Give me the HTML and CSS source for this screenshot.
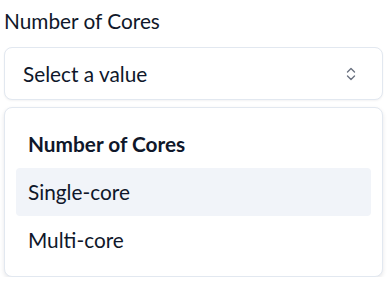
FILE: index.html
```html
<!DOCTYPE html>
<html lang="en">

<head>
  <meta charset="UTF-8" />
  <meta name="viewport" content="width=device-width, initial-scale=1.0" />
  <title>Number of Cores</title>
  <link rel="stylesheet" href="styles.css">
</head>

<body>
  <div class="field">
    <label class="field-label">Number of Cores</label>
    <button class="select-trigger" type="button">
      <span class="select-value">Select a value</span>
      <svg class="select-icon" width="10" height="16" viewBox="0 0 10 16" fill="none">
        <path d="M1.5 6 L5 2.5 L8.5 6" stroke="#6b7280" stroke-width="1.4" stroke-linecap="round" stroke-linejoin="round" />
        <path d="M1.5 10 L5 13.5 L8.5 10" stroke="#6b7280" stroke-width="1.4" stroke-linecap="round" stroke-linejoin="round" />
      </svg>
    </button>
    <ul class="select-menu">
      <li class="menu-group">Number of Cores</li>
      <li class="menu-item on">Single-core</li>
      <li class="menu-item">Multi-core</li>
    </ul>
  </div>
</body>

</html>
```

FILE: styles.css
```css
html, body, div, ul, li {
  padding: 0;margin: 0;
}
ul {
  list-style: none;
}

body {
  font-family: Lato, "Noto Sans", sans-serif;
  font-size: 20.8px;
  color: #0f172a;
  background: #fff;
  padding: 5px 6px 0 4px;
}

.field {
  display: flex;
  flex-direction: column;
}

.field-label {
  line-height: 31px;
  margin-bottom: 11px;
}

.select-trigger {
  display: flex;
  align-items: center;
  justify-content: space-between;
  height: 53px;
  padding: 0 26px 0 18px;
  background: #fff;
  border: 1px solid #e2e8f0;
  border-radius: 8px;
  font: inherit;
  color: #0f172a;
  box-shadow: 0 1px 2px rgba(15, 23, 42, .05);
}

.select-menu {
  margin-top: 7px;
  padding: 12px 11px;
  border: 1px solid #e2e8f0;
  border-radius: 8px;
  background: #fff;
  box-shadow: 0 2px 4px rgba(15, 23, 42, .1);
}

.menu-group {
  font-weight: 700;
  line-height: 31px;
  padding: 8px 12px 9px;
}

.menu-item {
  line-height: 31px;
  padding: 8px 12px 9px;
  border-radius: 4px;
}

.menu-item.on {
  background: #f1f4f9;
}
```
